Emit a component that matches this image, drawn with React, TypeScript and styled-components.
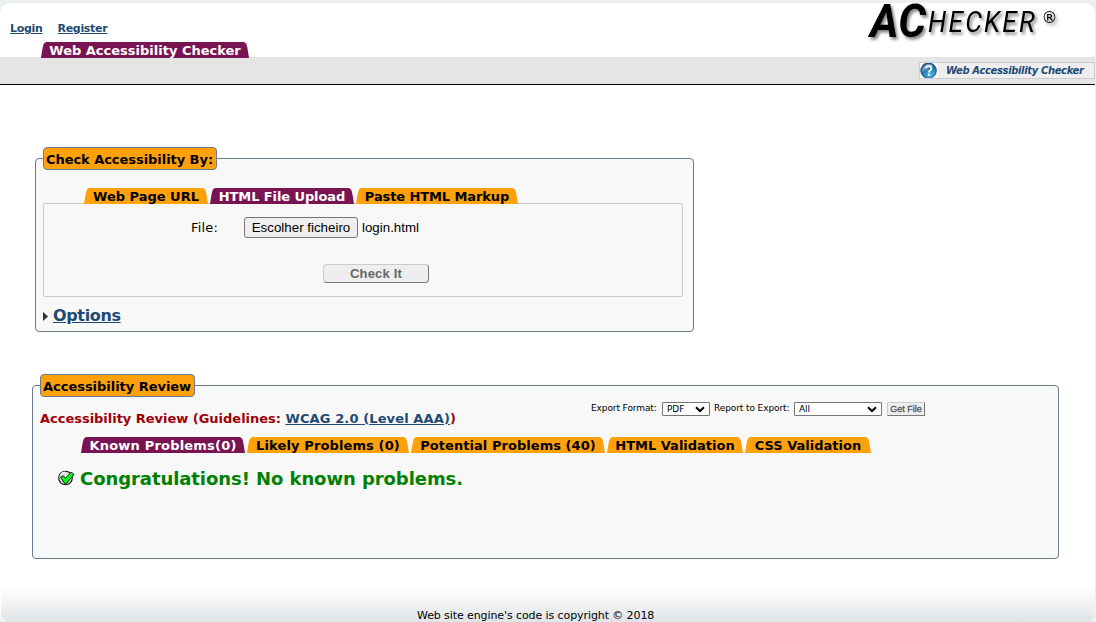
import React from "react";
import styled, { createGlobalStyle } from "styled-components";

const Global = createGlobalStyle`
  * { box-sizing: border-box; }
  body {
    margin: 0;
    background: #ebeff1;
    font-family: Verdana, "DejaVu Sans", sans-serif;
    color: #000;
  }
`;

const Page = styled.div`
  display: flex;
  flex-direction: column;
  width: 1096px;
  height: 622px;
  padding: 3px 1px 0 0;
`;

const Sheet = styled.div`
  display: flex;
  flex-direction: column;
  flex: 1;
  background: #fff;
  border-radius: 10px;
`;

const Header = styled.header`
  display: flex;
  justify-content: space-between;
  height: 54px;
`;

const HeaderLeft = styled.div`
  display: flex;
  flex-direction: column;
`;

const UserLinks = styled.nav`
  display: flex;
  flex: none;
  gap: 15px;
  height: 39px;
  padding: 18px 0 0 10px;
  font-size: 11px;
  line-height: 16px;
  font-weight: bold;
`;

const Link = styled.a<{ $ls?: number }>`
  color: #1f4a75;
  text-decoration: underline;
  letter-spacing: ${(p) => p.$ls ?? 0}px;
`;

const TabRow = styled.div<{ $indent: number }>`
  display: flex;
  gap: 2px;
  height: 16px;
  padding-left: ${(p) => p.$indent}px;
`;

const MainTabs = styled(TabRow)`
  position: relative;
  z-index: 1;
  flex: none;
`;

const TabShape = styled.div<{ $w: number; $active?: boolean; $ls?: number }>`
  width: ${(p) => p.$w}px;
  height: 16px;
  flex: none;
  text-align: center;
  font-size: 13px;
  line-height: 17px;
  font-weight: bold;
  white-space: nowrap;
  letter-spacing: ${(p) => p.$ls ?? 0}px;
  color: ${(p) => (p.$active ? "#fff" : "#000")};
  background: ${(p) => (p.$active ? "#7a1352" : "#ffa10d")};
  clip-path: polygon(
    0 100%, 1px 60%, 2px 25%, 3px 10%, 5px 0,
    calc(100% - 5px) 0, calc(100% - 3px) 10%, calc(100% - 2px) 25%,
    calc(100% - 1px) 60%, 100% 100%
  );
`;

const TabBack = styled.div`
  background: #fff;
`;

const Logo = styled.svg`
  display: block;
  margin-top: -3px;
  width: 240px;
  height: 57px;
  overflow: visible;
`;

const SubBar = styled.div`
  display: flex;
  justify-content: flex-end;
  align-items: flex-start;
  height: 28px;
  padding-top: 5px;
  background: #e5e5e5;
  border-bottom: 1px solid #000;
`;

const HelpLink = styled.div`
  display: flex;
  align-items: center;
  width: 176px;
  height: 17px;
  border: 1px solid #ccc;
  background: #eee;
  color: #1f4a75;
  font-size: 10px;
  font-weight: bold;
  font-style: italic;
  white-space: nowrap;
  gap: 8px;
`;

const Content = styled.main`
  display: flex;
  flex-direction: column;
  height: 501px;
`;

const Panel = styled.section<{ $w: number; $m: string }>`
  width: ${(p) => p.$w}px;
  height: 174px;
  margin: ${(p) => p.$m};
  padding: 0 7px;
  border: 1px solid #6b7b8c;
  border-radius: 4px;
  background: #f8f8f8;
`;

const Legend = styled.div<{ $w: number; $ls?: number }>`
  width: ${(p) => p.$w}px;
  height: 23px;
  margin-top: -12px;
  padding-left: 2px;
  border: 1px solid #6b7b8c;
  border-radius: 4px;
  background: #ffa10d;
  font-size: 13px;
  line-height: 23px;
  font-weight: bold;
  white-space: nowrap;
  letter-spacing: ${(p) => p.$ls ?? 0}px;
`;

const UploadTabs = styled(TabRow)`
  margin-top: 18px;
  position: relative;
`;

const UploadBox = styled.div`
  width: 640px;
  height: 94px;
  margin-top: -1px;
  padding-top: 13px;
  border: 1px solid #ccc;
  border-radius: 2px;
`;

const FileRow = styled.div`
  display: flex;
  align-items: center;
  height: 21px;
  padding-left: 147px;
  font-size: 13px;
`;

const FileLabel = styled.span`
  width: 53px;
  letter-spacing: 0.2px;
`;

const FileButton = styled.button`
  width: 114px;
  height: 21px;
  padding: 0;
  border: 1px solid #767676;
  border-radius: 3px;
  background: #efefef;
  font: 13.33px "Liberation Sans", Arial, sans-serif;
  color: #000;
`;

const FileName = styled.span`
  margin-left: 4px;
  font: 13.33px "Liberation Sans", Arial, sans-serif;
`;

const CheckButton = styled.button`
  display: block;
  width: 106px;
  height: 19px;
  margin: 26px 0 0 279px;
  padding: 0;
  border: 1px solid;
  border-color: #ccc #777 #777 #ccc;
  border-radius: 4px;
  background: #eee;
  font: bold 13px "Liberation Sans", Arial, sans-serif;
  letter-spacing: 0.2px;
  line-height: 16px;
  color: #666;
`;

const OptionsRow = styled.div`
  display: flex;
  align-items: center;
  gap: 5px;
  height: 20px;
  margin-top: 8px;
  font-size: 16px;
  font-weight: bold;
`;

const Arrow = styled.svg`
  display: block;
  margin-top: 3px;
`;

const ReviewHead = styled.div`
  display: flex;
  justify-content: space-between;
  height: 30px;
  margin-top: 5px;
  padding-right: 126px;
`;

const ReviewTitle = styled.div`
  padding-top: 8px;
  font-size: 13px;
  line-height: 17px;
  font-weight: bold;
  color: #a00008;
  white-space: nowrap;
  letter-spacing: -0.02px;
`;

const ExportForm = styled.div`
  display: flex;
  align-items: center;
  height: 14px;
  font-size: 9px;
  white-space: nowrap;
`;

const FieldLabel = styled.span<{ $w: number }>`
  width: ${(p) => p.$w}px;
  letter-spacing: -0.1px;
  line-height: 12px;
  padding-bottom: 2px;
`;

const SelectBox = styled.div<{ $w: number; $m: string }>`
  display: flex;
  justify-content: space-between;
  align-items: center;
  width: ${(p) => p.$w}px;
  height: 14px;
  margin: ${(p) => p.$m};
  padding: 0 4px;
  border: 1px solid #767676;
  border-radius: 1px;
  background: #fff;
  font-size: 9px;
  letter-spacing: -0.1px;
`;

const GetFile = styled.button`
  width: 38px;
  height: 14px;
  padding: 0;
  border: 1px solid;
  border-color: #ccc #777 #777 #ccc;
  background: #eee;
  font: 9px/11px "Liberation Sans", Arial, sans-serif;
  -webkit-text-stroke: 0.3px #555;
  color: #555;
`;

const ReviewTabs = styled(TabRow)`
  margin-top: 5px;
`;

const Congrats = styled.div`
  display: flex;
  align-items: center;
  gap: 5px;
  height: 24px;
  margin-top: 13px;
  padding-left: 18px;
  color: #008000;
  font-size: 18px;
  font-weight: bold;
  white-space: nowrap;
  letter-spacing: -0.07px;
`;

const Footer = styled.footer`
  flex: 1;
  margin-left: 1px;
  padding: 23px 0 0 416px;
  font-size: 11px;
  line-height: 14px;
  white-space: nowrap;
  letter-spacing: -0.09px;
  border-radius: 0 0 10px 10px;
  background: linear-gradient(#fff 0, #f4f6f6 14px, #dfe4e6 36px);
`;

const HelpText = styled.span`
  letter-spacing: -0.36px;
`;

type TabProps = { w: number; active?: boolean; ls?: number; children: React.ReactNode };
const Tab = ({ w, active, ls, children }: TabProps) => (
  <TabBack>
    <TabShape $w={w} $active={active} $ls={ls}>{children}</TabShape>
  </TabBack>
);

const Chevron = () => (
  <svg width="10" height="7" viewBox="0 0 10 7">
    <path d="M1 1.2 L5 5 L9 1.2" fill="none" stroke="#000" strokeWidth="2" />
  </svg>
);

const HelpIcon = () => (
  <svg width="18" height="15" viewBox="0 0 18 15">
    <defs>
      <radialGradient id="orb" cx="0.6" cy="0.75" r="0.75">
        <stop offset="0" stopColor="#58b4e0" />
        <stop offset="0.6" stopColor="#2678b0" />
        <stop offset="1" stopColor="#164878" />
      </radialGradient>
    </defs>
    <rect width="18" height="15" fill="#fff" />
    <circle cx="8.6" cy="7.6" r="7.9" fill="url(#orb)" stroke="#27567f" strokeWidth="0.7" />
    <path d="M2.2 6 Q4 1 8.6 .8 Q12.6 1 13.6 3 Q8 4 2.2 9Z" fill="#b5d8ec" opacity="0.5" />
    <path d="M6 5.4 Q6.1 3.2 8.7 3.2 Q11.4 3.2 11.4 5.4 Q11.4 6.7 10 7.5 Q8.9 8.1 8.9 9.4" fill="none" stroke="#fff" strokeWidth="1.8" />
    <rect x="7.9" y="10.8" width="2" height="2" fill="#fff" />
  </svg>
);

const CheckIcon = () => (
  <svg width="17" height="16" viewBox="0 0 17 16">
    <circle cx="7.5" cy="8" r="6.8" fill="#ddd" stroke="#111" strokeWidth="1.1" />
    <path d="M2.5 4.5 Q4 2.5 7 2.2" fill="none" stroke="#fff" strokeWidth="1.2" />
    <path d="M2.6 7.2 L5.2 5.8 L7.6 8.2 L13.2 2.2 L16 4.4 L8.6 13.4 L6.6 13.4Z" fill="#0f1" stroke="#000" strokeWidth="0.9" />
  </svg>
);

export default function App() {
  return (
    <>
      <Global />
      <Page>
        <Sheet>
          <Header>
            <HeaderLeft>
              <UserLinks>
                <Link $ls={-0.3}>Login</Link>
                <Link $ls={-0.32}>Register</Link>
              </UserLinks>
              <MainTabs $indent={41}>
                <Tab w={208} active>Web Accessibility Checker</Tab>
              </MainTabs>
            </HeaderLeft>
            <Logo viewBox="0 0 240 57">
              <defs>
                <filter id="shade" x="-10%" y="-20%" width="125%" height="150%">
                  <feDropShadow dx="2" dy="2.5" stdDeviation="1.4" floodColor="#000" floodOpacity="0.5" />
                </filter>
              </defs>
              <g filter="url(#shade)" fontFamily="Roboto, sans-serif" fontStyle="italic" fill="#000">
                <text x="15" y="36.5" fontSize="46" fontWeight="700" textLength="56" lengthAdjust="spacingAndGlyphs">AC</text>
                <text transform="translate(73 31.5) scale(0.88 1)" fontSize="30" letterSpacing="2.5">HECKER</text>
                <text x="186.5" y="22.5" fontSize="16" fontStyle="normal" fontFamily="DejaVu Sans, sans-serif">®</text>
              </g>
            </Logo>
          </Header>
          <SubBar>
            <HelpLink>
              <HelpIcon />
              <HelpText>Web Accessibility Checker</HelpText>
            </HelpLink>
          </SubBar>
          <Content>
            <Panel $w={659} $m="73px 0 0 35px">
              <Legend $w={174} $ls={-0.05}>Check Accessibility By:</Legend>
              <UploadTabs $indent={41}>
                <Tab w={124}>Web Page URL</Tab>
                <Tab w={144} active ls={-0.1}>HTML File Upload</Tab>
                <Tab w={162} ls={-0.1}>Paste HTML Markup</Tab>
              </UploadTabs>
              <UploadBox>
                <FileRow>
                  <FileLabel>File:</FileLabel>
                  <FileButton>Escolher ficheiro</FileButton>
                  <FileName>login.html</FileName>
                </FileRow>
                <CheckButton>Check It</CheckButton>
              </UploadBox>
              <OptionsRow>
                <Arrow width="5" height="9" viewBox="0 0 5 9"><path d="M0 0 L5 4.5 L0 9Z" fill="#333" /></Arrow>
                <Link $ls={-0.35}>Options</Link>
              </OptionsRow>
            </Panel>
            <Panel $w={1027} $m="53px 0 0 32px">
              <Legend $w={155} $ls={-0.03}>Accessibility Review</Legend>
              <ReviewHead>
                <ReviewTitle>
                  Accessibility Review (Guidelines: <Link $ls={0.12}>WCAG 2.0 (Level AAA)</Link>)
                </ReviewTitle>
                <ExportForm>
                  <FieldLabel $w={66}>Export Format:</FieldLabel>
                  <SelectBox $w={48} $m="0 4px 0 5px">PDF<Chevron /></SelectBox>
                  <FieldLabel $w={75}>Report to Export:</FieldLabel>
                  <SelectBox $w={88} $m="0 5px 0 5px">All<Chevron /></SelectBox>
                  <GetFile>Get File</GetFile>
                </ExportForm>
              </ReviewHead>
              <ReviewTabs $indent={41}>
                <Tab w={164} active ls={0.2}>Known Problems(0)</Tab>
                <Tab w={162} ls={0.12}>Likely Problems (0)</Tab>
                <Tab w={194} ls={0.05}>Potential Problems (40)</Tab>
                <Tab w={136}>HTML Validation</Tab>
                <Tab w={126}>CSS Validation</Tab>
              </ReviewTabs>
              <Congrats>
                <CheckIcon />
                <span>Congratulations! No known problems.</span>
              </Congrats>
            </Panel>
          </Content>
          <Footer>Web site engine's code is copyright © 2018</Footer>
        </Sheet>
      </Page>
    </>
  );
}
